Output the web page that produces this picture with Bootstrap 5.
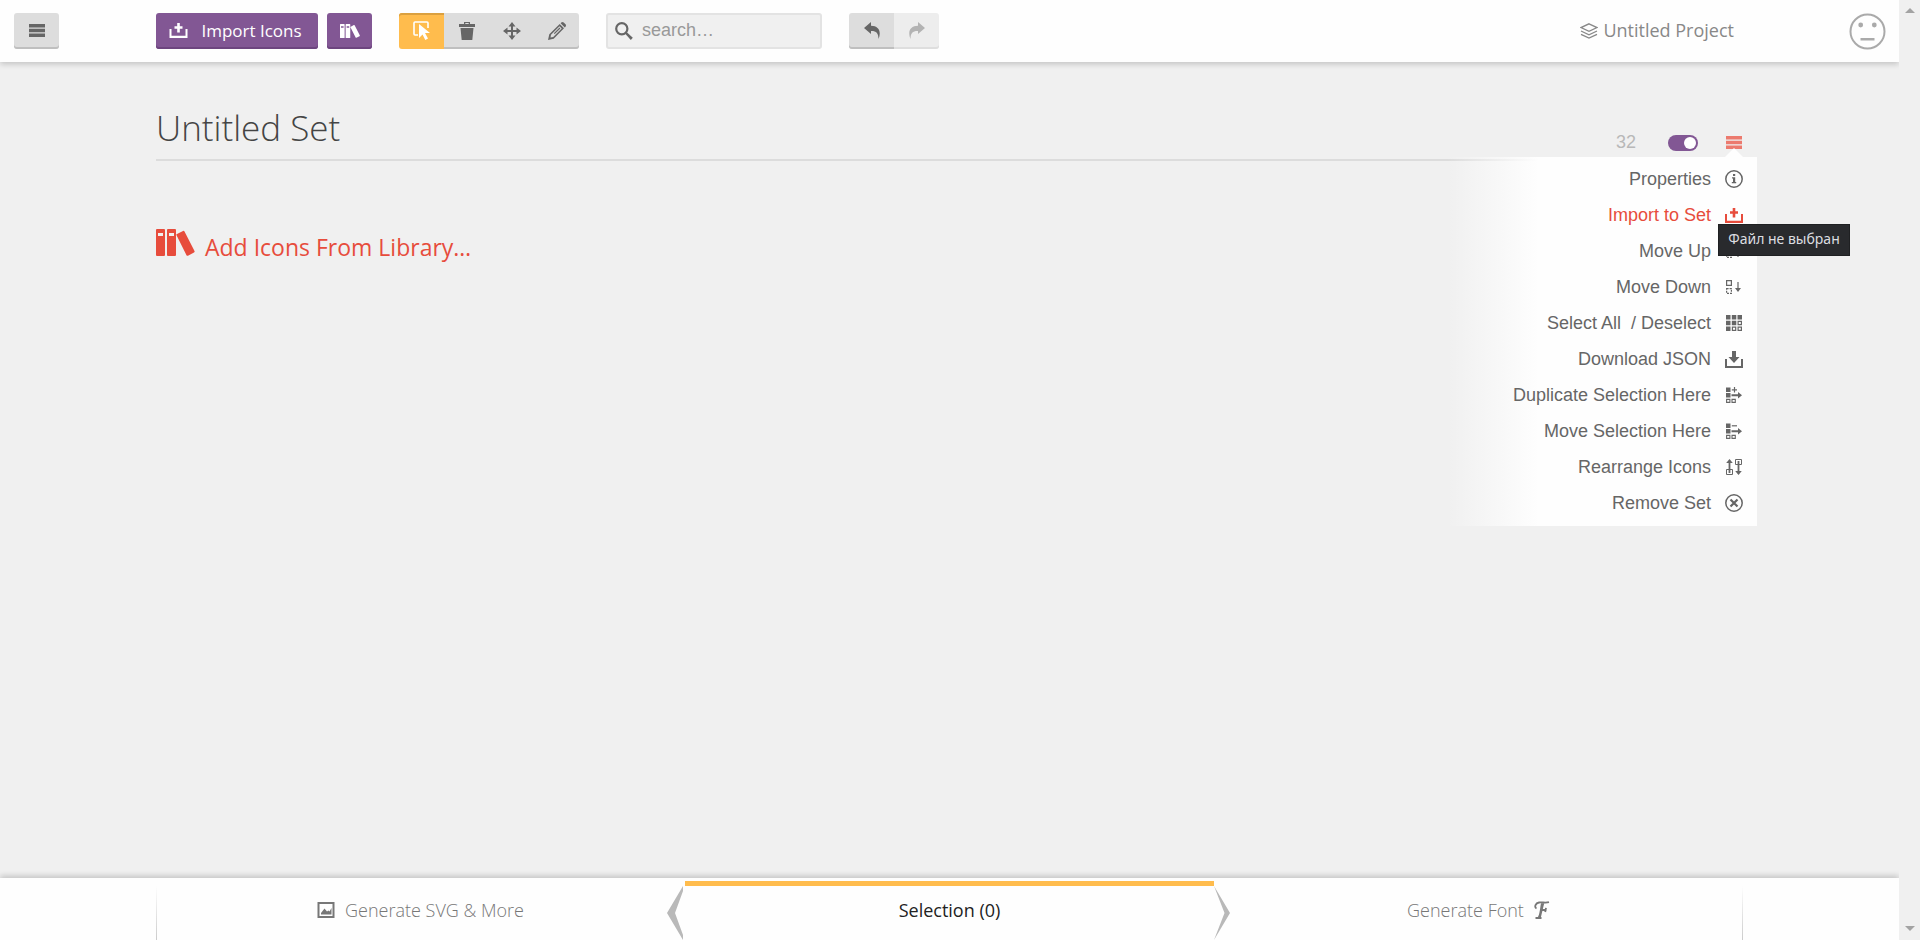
<!DOCTYPE html>
<html lang="en">
<head>
<meta charset="utf-8">
<meta name="viewport" content="width=device-width, initial-scale=1">
<title>Icon Sets</title>
<link rel="stylesheet" href="https://cdn.jsdelivr.net/npm/bootstrap@5.3.0/dist/css/bootstrap.min.css">
<style>
:root{--ink:#666;--panel:#fefefe;--purple:#825794;--red:#e74c3c;--amber:#ffbc4d}
body{background:#f0f0f0;color:#444;font-family:"Open Sans","Noto Sans",sans-serif;font-size:17px}
svg{fill:currentColor;display:block;flex:none}
.topbar{background:var(--panel);height:62px;padding:0 14px;box-shadow:0 2px 6px rgba(0,0,0,.2);clip-path:inset(0 0 -12px 0)}
.menu-slot{width:142px}
.block-gap{margin-left:27px}
.tool{height:36px;min-width:45px;padding:0 0 1px;border:0;border-radius:3px;background:#ddd;color:var(--ink);box-shadow:inset 0 -2px 0 #bfbfbf;display:flex;align-items:center;justify-content:center}
.tool:hover{background:#ddd;color:var(--ink)}
.btn-group>.tool{margin-left:0!important}
.tool-purple,.tool-purple:hover{background:var(--purple);color:#fff;box-shadow:inset 0 -2px 0 #6d457f}
.import{min-width:162px;padding:0 3px 1px 0;gap:13px;font-size:17px;margin-right:9px}
.tool.active{background:var(--amber);color:#fff;box-shadow:inset 0 2px 0 #dba03f}
.tool:disabled{background:#ededed;color:#b3b3b3;opacity:1;box-shadow:inset 0 -2px 0 #dedede}
.search-box{width:216px;height:36px;border:2px solid #e3e3e3;border-radius:3px;background:#f0f0f0;color:var(--ink);padding:0 7px}
.search-box input{border:0;background:none!important;box-shadow:none!important;font:18px/28px "Liberation Sans",Arial,sans-serif;padding:0 0 3px 9px;min-width:0}
.search-box input::placeholder{color:#999;opacity:1}
.project{color:#888;gap:5px;text-decoration:none;margin-right:115px;font-size:18px;padding-bottom:1px}
.face{border:0;background:none;color:#aaa;padding:0;margin-right:-1px}
.scroll-rail{width:21px;color:#a3a3a3;padding:8px 0 9px}
.page-body{padding:34px 157px 0 156px}
.set-head{height:65px;border-bottom:2px solid #dcdcdc}
.set-title{font-size:35px;font-weight:300;line-height:63px;margin:0;color:#444}
.set-tools{height:32px;padding-bottom:1px;font:18px/31px "Liberation Sans",Arial,sans-serif;color:#b8b8b8}
.set-tools .form-check-input{width:30px;height:16px;margin:0;border:0;background-color:var(--purple)!important;box-shadow:none}
.switch-wrap{margin:0 28px 0 32px;min-height:0;padding:0}
.burger{border:0;background:none;padding:0;color:#ec7a6e}
.set-menu{position:absolute;top:61px;right:-15px;width:310px;padding:4px 14px 5px 0;margin:0;list-style:none;background:linear-gradient(90deg,rgba(254,254,254,0),#fefefe 92px);font:18px/36px "Liberation Sans",Arial,sans-serif}
.set-menu::before{content:"";position:absolute;top:-9px;right:14px;border:9px solid transparent;border-top:0;border-bottom-color:#fefefe}
.set-menu button{display:flex;width:100%;align-items:center;justify-content:flex-end;gap:14px;border:0;background:none;padding:0;color:var(--ink);text-align:right}
.set-menu .hot{color:var(--red)}
.tip-box{position:absolute;top:27px;right:-107px;width:132px;height:32px;background:#292a2d;color:#dcdde0;font:14px/28px "Noto Sans",sans-serif;text-align:center;z-index:2;border:1px solid #1f2022;white-space:nowrap}
.library{color:var(--red);font-size:23px;line-height:36px;gap:10px;margin-top:68px;text-decoration:none}
.bottombar{height:62px;background:var(--panel);padding:0 156px;box-shadow:0 -2px 6px rgba(0,0,0,.2);clip-path:inset(-12px 0 0 0)}
.tab{flex:1 1 0;position:relative;height:62px;padding-top:2px;color:#777;text-decoration:none;display:flex;align-items:center;justify-content:center;gap:10px;font-weight:300;font-size:18px}
.tab-now{color:#222;border-top:5px solid var(--amber);height:59px;margin-top:3px;padding:0 0 6px;font-weight:400}
.edge::after{content:"";position:absolute;top:8px;bottom:0;width:1px;background:linear-gradient(transparent,#ccc)}
.edge-start::after{left:0}
.edge-end::after{right:0}
.chev{position:absolute;top:0;color:#b9b9b9}
.chev-l{right:100%}
.chev-r{left:100%}
</style>
</head>
<body>
<svg class="d-none" aria-hidden="true">
<symbol id="bars" viewBox="0 0 16 13"><path d="M0 0h16v3.400H0zM0 4.800h16v3.400H0zM0 9.600h16V13H0z"/></symbol>
<symbol id="import" viewBox="0 0 18 15"><path d="M7.700 0h2.600v3.200H13v2.600h-2.700V9.500H7.700V5.800H5V3.200h2.700zM0 6h2v6.800h14V6h2v9H0z"/></symbol>
<symbol id="books" viewBox="0 0 39 27"><path fill-rule="evenodd" d="M1 0h7q1 0 1 1v25q0 1-1 1H1q-1 0-1-1V1q0-1 1-1zm1 4v3h5V4zM12 0h7q1 0 1 1v25q0 1-1 1h-7q-1 0-1-1V1q0-1 1-1zm1 4v3h5V4zM21 5l6-3q1-.5 1.500.500L38.500 22q.5 1-.5 1.500L32 26.700q-1 .5-1.500-.5L20.400 6q-.3-.7.600-1z"/></symbol>
<symbol id="moveBoxes" viewBox="0 0 16 14"><path fill="none" stroke="currentColor" stroke-width="1.200" d="M.6.600h4.800v4.800H.6z"/><path fill="none" stroke="currentColor" stroke-width="1.200" stroke-dasharray="2 1" d="M.6 8.600h4.800v4.800H.6z"/></symbol>
<symbol id="picked" viewBox="0 0 16 16"><path d="M0 .5h4.500V5H0zM0 6h4.500v4.500H0zM5.500 7.300H12V5l4 3.300-4 3.300V9.300H5.500z"/><path fill="none" stroke="currentColor" stroke-width="1.100" d="M.6 12.400h3.300v3H.6zM6 12.400h3.300v3H6z"/></symbol>
</svg>
<div class="d-flex min-vh-100">
<div class="d-flex flex-column flex-grow-1">
<header class="topbar d-flex align-items-center">
  <div class="menu-slot"><button class="btn tool" type="button" aria-label="Menu"><svg width="16" height="13"><use href="#bars"/></svg></button></div>
  <button class="btn tool tool-purple import" type="button"><svg width="19" height="15"><use href="#import"/></svg>Import Icons</button>
  <button class="btn tool tool-purple" type="button" aria-label="Library"><svg width="20" height="14"><use href="#books"/></svg></button>
  <div class="btn-group block-gap" role="group" aria-label="Tools">
    <button class="btn tool active" type="button" aria-label="Select"><svg width="18" height="20" viewBox="0 0 18 20"><path fill="none" stroke="currentColor" stroke-width="1.600" d="M5 14H2q-1 0-1-1V2q0-1 1-1h12q1 0 1 1v5"/><path d="M6 3l11 9h-5l3 5.500-2.700 1.500-2.800-5.500L6 17z"/></svg></button>
    <button class="btn tool" type="button" aria-label="Delete"><svg width="16" height="18" viewBox="0 0 16 18"><path d="M5 2V0h6v2h5v3H0V2zm1.300 0h3.400v-.900H6.300zM1.500 6h13l-1.200 12H2.700z"/></svg></button>
    <button class="btn tool" type="button" aria-label="Move"><svg width="18" height="18" viewBox="0 0 18 18"><path d="M9 0l3.500 4.500H10V8h3.500V5.500L18 9l-4.500 3.500V10H10v3.500h2.500L9 18l-3.500-4.500H8V10H4.500v2.500L0 9l4.500-3.500V8H8V4.500H5.500z"/></svg></button>
    <button class="btn tool" type="button" aria-label="Edit"><svg width="18" height="18" viewBox="0 0 18 18"><path fill-rule="evenodd" d="M0 18l1.300-5.700L11.700 2l4.300 4.300L5.700 16.700zM3 12.800l-.5 2.700 2.700-.5 8.500-8.500-2.200-2.200zM12.600 1.200l.7-.7q1.200-1 2.400 0l1.800 1.800q1 1.200 0 2.400l-.7.700zM5.800 11.200l5.700-5.700.9.900-5.700 5.700z"/></svg></button>
  </div>
  <label class="search-box d-flex align-items-center block-gap"><svg width="18" height="18" viewBox="0 0 18 18"><circle cx="6.800" cy="6.800" r="5.600" fill="none" stroke="currentColor" stroke-width="2.200"/><path d="M10 11.600l1.600-1.600 6.200 5.700-2 2.200z"/></svg><input class="form-control" type="text" placeholder="search…" aria-label="Search"></label>
  <div class="btn-group block-gap" role="group" aria-label="History">
    <button class="btn tool" type="button" aria-label="Undo"><svg width="16" height="17" viewBox="0 0 16 17"><path d="M0 6l7-6v3.700c8 0 10.500 6 7.500 13.300 0-6-2.500-8.200-7.500-8V12z"/></svg></button>
    <button class="btn tool" type="button" aria-label="Redo" disabled><svg width="16" height="17" viewBox="0 0 16 17"><path d="M16 6L9 0v3.700C1 3.700-1.500 9.700 1.500 17c0-6 2.500-8.200 7.500-8V12z"/></svg></button>
  </div>
  <a class="project d-flex align-items-center ms-auto" href="#"><svg width="18" height="16" viewBox="0 0 18 16"><g fill="none" stroke="currentColor" stroke-width="1.300"><path d="M9 .8L17 4.600 9 8.400 1 4.600z"/><path d="M1 8l8 3.800L17 8M1 11.300l8 3.800 8-3.800"/></g></svg>Untitled Project</a>
  <button class="face" type="button" aria-label="Account"><svg width="37" height="37" viewBox="0 0 37 37"><circle cx="18.500" cy="18.500" r="17" fill="none" stroke="currentColor" stroke-width="2"/><circle cx="11.700" cy="12" r="2.400"/><circle cx="25.300" cy="12" r="2.400"/><path d="M11.500 25h14v2.500h-14z"/></svg></button>
</header>
<main class="page-body flex-grow-1">
  <section>
  <div class="set-head d-flex align-items-end position-relative">
    <h1 class="set-title me-auto">Untitled Set</h1>
    <div class="set-tools d-flex align-items-center">
      <span>32</span>
      <div class="form-check form-switch switch-wrap d-flex"><input class="form-check-input" type="checkbox" role="switch" aria-label="Show set" checked></div>
      <button class="burger" type="button" aria-label="Set menu"><svg width="16" height="13"><use href="#bars"/></svg></button>
    </div>
    <ul class="set-menu">
      <li><button type="button">Properties<svg width="18" height="18" viewBox="0 0 18 18"><circle cx="9" cy="9" r="8.200" fill="none" stroke="currentColor" stroke-width="1.500"/><path d="M8 4h2.200v2H8zM7 7.300h3.200V12h1v1.200H6.800V12H8V8.500H7z"/></svg></button></li>
      <li class="position-relative"><button class="hot" type="button">Import to Set<svg width="18" height="15"><use href="#import"/></svg></button><div class="tip-box" role="tooltip">Файл не выбран</div></li>
      <li><button type="button">Move Up<svg width="18" height="14" viewBox="-1 0 18 14"><use href="#moveBoxes" width="16" height="14"/><path d="M11.400 13V6H9l3-4 3 4h-2.400v7z"/></svg></button></li>
      <li><button type="button">Move Down<svg width="18" height="14" viewBox="-1 0 18 14"><use href="#moveBoxes" width="16" height="14"/><path d="M11.400 2v6H9l3 4 3-4h-2.400V2z"/></svg></button></li>
      <li><button type="button"><span>Select All&nbsp; / Deselect</span><svg width="18" height="16" viewBox="-1 0 18 16"><path d="M0 0h4.500v4.500H0zM5.800 0h4.500v4.500H5.800zM11.500 0H16v4.500h-4.500zM0 5.800h4.500v4.500H0zM5.800 5.800h4.500v4.500H5.800zM0 11.500h4.500V16H0z"/><path fill="none" stroke="currentColor" stroke-width="1.200" d="M12.100 6.400h3.300v3.300h-3.300zM6.400 12.100h3.300v3.300H6.400zM12.100 12.100h3.300v3.300h-3.300z"/></svg></button></li>
      <li><button type="button">Download JSON<svg width="18" height="17" viewBox="0 0 18 17"><path d="M7 0h4v6h3.500L9 12 3.500 6H7zM0 8h2v7h14V8h2v9H0z"/></svg></button></li>
      <li><button type="button">Duplicate Selection Here<svg width="18" height="16" viewBox="-1 0 18 16"><use href="#picked" width="16" height="16"/><path d="M7.900 0h1.200v2.200H11v1.200H9.100v2.200H7.900V3.400H5.800V2.200h2.100z"/></svg></button></li>
      <li><button type="button">Move Selection Here<svg width="18" height="16" viewBox="-1 0 18 16"><use href="#picked" width="16" height="16"/><path d="M5.800 2.200H11v1.200H5.800z"/></svg></button></li>
      <li><button type="button">Rearrange Icons<svg width="18" height="16" viewBox="-1 0 18 16"><path fill="none" stroke="currentColor" stroke-width="1" d="M.5 10.500h6v5h-6zM9.500.500h6v5h-6z"/><path d="M2.600 14V4H.2l3.300-4 3.300 4H4.400v10zM11.600 2v10H9.200l3.300 4 3.300-4h-2.400V2z"/></svg></button></li>
      <li><button type="button">Remove Set<svg width="18" height="18" viewBox="0 0 18 18"><circle cx="9" cy="9" r="8.200" fill="none" stroke="currentColor" stroke-width="1.500"/><path fill="none" stroke="currentColor" stroke-width="2.200" d="M5.500 5.500l7 7M12.500 5.500l-7 7"/></svg></button></li>
    </ul>
  </div>
  <a class="library d-inline-flex align-items-baseline" href="#"><svg width="39" height="27"><use href="#books"/></svg>Add Icons From Library…</a>
  </section>
</main>
<footer class="bottombar">
  <nav class="d-flex" aria-label="Output">
    <a class="tab edge edge-start" href="#"><svg width="18" height="16" viewBox="0 0 18 16"><path fill="none" stroke="currentColor" stroke-width="2" d="M1.500 1h15v14h-15z"/><path d="M4 12.500V11l3.500-4.500 2.500 3 1.500-1 1 1L14.500 6v6.500z"/></svg>Generate SVG &amp; More</a>
    <a class="tab tab-now" href="#" aria-current="page"><svg class="chev chev-l" width="18" height="54" viewBox="0 0 18 54"><path d="M16 0v5L8 27l8 22v5L0 27z"/></svg>Selection (0)<svg class="chev chev-r" width="16" height="54" viewBox="0 0 16 54"><path d="M0 0l16 27L0 54l10.500-27z"/></svg></a>
    <a class="tab edge edge-end" href="#">Generate Font<svg width="16" height="18" viewBox="0 0 16 18"><path fill="none" stroke="currentColor" stroke-width="1.800" d="M2.500 7.500C0 6 1.500 2 5 1.500s6 .8 10-.3M1.500 17H7.500M7 9h5.500M12 6.800l-.8 4.200"/><path d="M7 2.300h3.200L6.700 17H3.500C6 13 6 7 7 2.300z"/></svg></a>
  </nav>
</footer>
</div>
<div class="scroll-rail d-flex flex-column align-items-center justify-content-between" aria-hidden="true">
  <svg width="10" height="5" viewBox="0 0 10 5"><path d="M0 5l5-5 5 5z"/></svg>
  <svg width="10" height="5" viewBox="0 0 10 5"><path d="M0 0h10L5 5z"/></svg>
</div>
</div>
<script src="https://cdn.jsdelivr.net/npm/bootstrap@5.3.0/dist/js/bootstrap.bundle.min.js"></script>
</body>
</html>
